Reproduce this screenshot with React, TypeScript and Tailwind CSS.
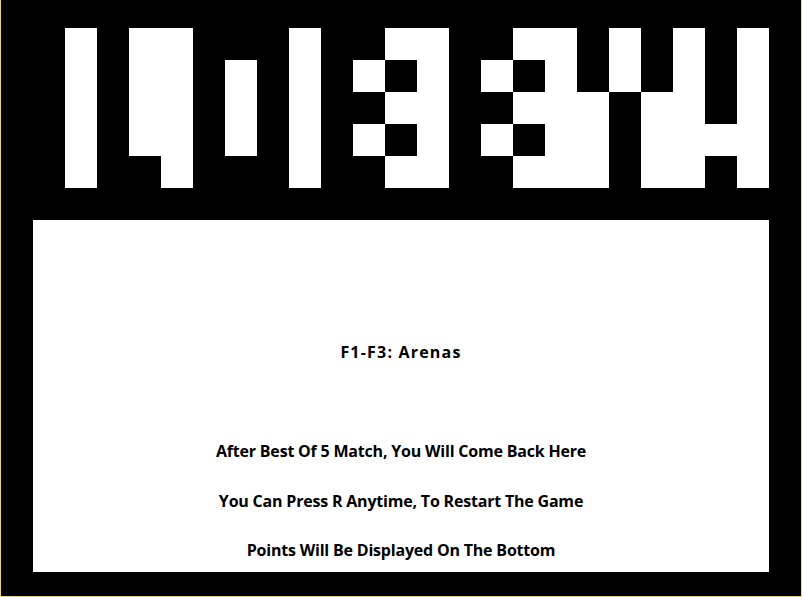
import React from 'react'

// 22 x 5 pixel logo, 1 = white block
const logo = [
    '1011000100110011010101',
    '1011010101010101010101',
    '1011010100110011101101',
    '1011010101010101101111',
    '1001000100110011101101'
]

const lines = [
    'After Best Of 5 Match, You Will Come Back Here',
    'You Can Press R Anytime, To Restart The Game',
    'Points Will Be Displayed On The Bottom'
]

function Logo() {
    return (
        <div className="grid grid-cols-[repeat(22,32px)] grid-rows-[repeat(5,32px)] ml-[64px]">
            {logo.flatMap((row, r) =>
                row.split('').map((cell, c) => (
                    <div key={`${r}-${c}`} className={cell === '1' ? 'bg-white' : 'bg-black'} />
                ))
            )}
        </div>
    )
}

export default function App() {
    return (
        <div className="w-[802px] h-[597px] bg-black border-x border-b border-[#e9d86e] pt-[28px] font-['Open_Sans',sans-serif] overflow-hidden">
            <Logo />

            <div className="flex flex-col items-center ml-[32px] mt-[32px] w-[736px] h-[352px] bg-white text-black text-[16px] font-bold leading-[20px] tracking-[-0.2px]">
                <p className="mt-[122px] tracking-[1.2px]">F1-F3: Arenas</p>
                <p className="mt-[79px]">{lines[0]}</p>
                <p className="mt-[30px]">{lines[1]}</p>
                <p className="mt-[29px]">{lines[2]}</p>
            </div>
        </div>
    )
}
